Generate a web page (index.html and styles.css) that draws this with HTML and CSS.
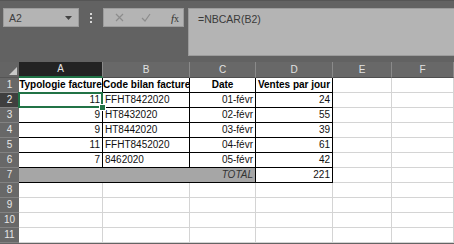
FILE: index.html
```html
<!DOCTYPE html>
<html lang="fr">
<head>
  <meta charset="UTF-8" />
  <title>Feuille</title>
  <link rel="stylesheet" href="styles.css">
</head>
<body>
  <div class="toolbar">
    <div class="namebox">
      <span>A2</span>
      <svg width="7" height="4" viewBox="0 0 7 4"><path d="M0 0h7L3.5 4z" fill="#444"/></svg>
    </div>
    <div class="grip"><i></i><i></i><i></i></div>
    <div class="fxbtns">
      <svg class="ico" width="9" height="9" viewBox="0 0 9 9"><path d="M1 1l7 7M8 1L1 8" stroke="#8c8c8c" stroke-width="1.2"/></svg>
      <svg class="ico" width="10" height="9" viewBox="0 0 10 9"><path d="M1 5l3 3 5-7" stroke="#8c8c8c" stroke-width="1.2" fill="none"/></svg>
      <span class="fx"><i>f</i>x</span>
    </div>
    <div class="formula">=NBCAR(B2)</div>
  </div>

  <div class="sheet">
    <div class="corner"></div>
    <div class="colhead sel">A</div>
    <div class="colhead">B</div>
    <div class="colhead">C</div>
    <div class="colhead">D</div>
    <div class="colhead">E</div>
    <div class="colhead">F</div>

    <div class="rowhead">1</div>
    <div class="c t th">Typologie facture</div>
    <div class="c t th">Code bilan facture</div>
    <div class="c t th">Date</div>
    <div class="c t th">Ventes par jour</div>
    <div class="c"></div><div class="c"></div>

    <div class="rowhead sel">2</div>
    <div class="c t r active">11</div>
    <div class="c t">FFHT8422020</div>
    <div class="c t r">01-févr</div>
    <div class="c t r">24</div>
    <div class="c"></div><div class="c"></div>

    <div class="rowhead">3</div>
    <div class="c t r">9</div>
    <div class="c t">HT8432020</div>
    <div class="c t r">02-févr</div>
    <div class="c t r">55</div>
    <div class="c"></div><div class="c"></div>

    <div class="rowhead">4</div>
    <div class="c t r">9</div>
    <div class="c t">HT8442020</div>
    <div class="c t r">03-févr</div>
    <div class="c t r">39</div>
    <div class="c"></div><div class="c"></div>

    <div class="rowhead">5</div>
    <div class="c t r">11</div>
    <div class="c t">FFHT8452020</div>
    <div class="c t r">04-févr</div>
    <div class="c t r">61</div>
    <div class="c"></div><div class="c"></div>

    <div class="rowhead">6</div>
    <div class="c t r">7</div>
    <div class="c t">8462020</div>
    <div class="c t r">05-févr</div>
    <div class="c t r">42</div>
    <div class="c"></div><div class="c"></div>

    <div class="rowhead">7</div>
    <div class="c t r total">TOTAL</div>
    <div class="c t r">221</div>
    <div class="c"></div><div class="c"></div>

    <div class="rowhead">8</div>
    <div class="c"></div><div class="c"></div><div class="c"></div><div class="c"></div><div class="c"></div><div class="c"></div>
    <div class="rowhead">9</div>
    <div class="c"></div><div class="c"></div><div class="c"></div><div class="c"></div><div class="c"></div><div class="c"></div>
    <div class="rowhead">10</div>
    <div class="c"></div><div class="c"></div><div class="c"></div><div class="c"></div><div class="c"></div><div class="c"></div>
    <div class="rowhead">11</div>
    <div class="c"></div><div class="c"></div><div class="c"></div><div class="c"></div><div class="c"></div><div class="c"></div>
  </div>
</body>
</html>
```

FILE: styles.css
```css
* { box-sizing: border-box; margin: 0; padding: 0; }
body { width: 454px; height: 244px; overflow: hidden; background: #646464; font-family: "Liberation Sans", Arial, sans-serif; font-size: 10px; }

.toolbar { display: flex; align-items: flex-start; height: 62px; padding: 7px 0 0 3px; background: #626262; border-top: 1px solid #555; }
.namebox { width: 76px; height: 19px; background: #b4b4b4; border: 1px solid #9c9c9c; display: flex; align-items: center; justify-content: space-between; padding: 0 6px 0 5px; color: #404040; font-size: 10.5px; }
.grip { width: 24px; height: 19px; display: flex; flex-direction: column; align-items: center; justify-content: center; gap: 2px; }
.grip i { width: 2px; height: 2px; background: #d6d6d6; }
.fxbtns { width: 81px; height: 19px; background: #b4b4b4; border: 1px solid #9c9c9c; display: flex; align-items: center; padding: 0 0 0 11px; gap: 17px; }
.fx { font-family: "Liberation Serif", serif; font-size: 10px; color: #333; margin-left: 3px; }
.fx i { font-size: 11px; }
.formula { flex: 1; height: 48px; margin-left: 4px; background: #b4b4b4; border: 1px solid #9c9c9c; border-right: none; padding: 4px 0 0 9px; color: #3a3a3a; font-size: 10.5px; }

.sheet { display: grid; grid-template-columns: 19px 84px 87px 66px 77px 59px 62px; grid-template-rows: 16px repeat(11, 15px); background: #fff; }

.corner { background: #646464; border-bottom: 1px solid #555; position: relative; }
.corner::after { content: ""; position: absolute; right: 2px; bottom: 2px; border-style: solid; border-width: 0 0 8px 8px; border-color: transparent transparent #c8c8c8 transparent; }
.colhead { background: #686868; color: #e2e2e2; text-align: center; line-height: 15px; border-right: 1px solid #8a8a8a; border-bottom: 1px solid #4e4e4e; }
.colhead.sel { background: #232323; border-bottom: 2px solid #217346; line-height: 14px; }
.rowhead { background: #686868; color: #e6e6e6; text-align: center; line-height: 14px; border-bottom: 1px solid #828282; }
.rowhead.sel { background: #3f3f3f; }

.c { border-right: 1px solid #d4d4d4; border-bottom: 1px solid #d4d4d4; padding: 0 2px; line-height: 14px; color: #111; white-space: nowrap; overflow: hidden; }
.c.t { border-right-color: #000; border-bottom-color: #000; }
.c.th { font-weight: bold; text-align: center; padding: 0; color: #000; }
.c.r { text-align: right; }
.total { grid-column: span 3; background: #a6a6a6; font-style: italic; color: #333; }

.active { position: relative; overflow: visible; }
.active::before { content: ""; position: absolute; left: -1px; top: -1px; right: -1px; bottom: -1px; border: 2px solid #217346; }
.active::after { content: ""; position: absolute; right: -4px; bottom: -4px; width: 5px; height: 5px; background: #217346; border: 1px solid #fff; }
```
